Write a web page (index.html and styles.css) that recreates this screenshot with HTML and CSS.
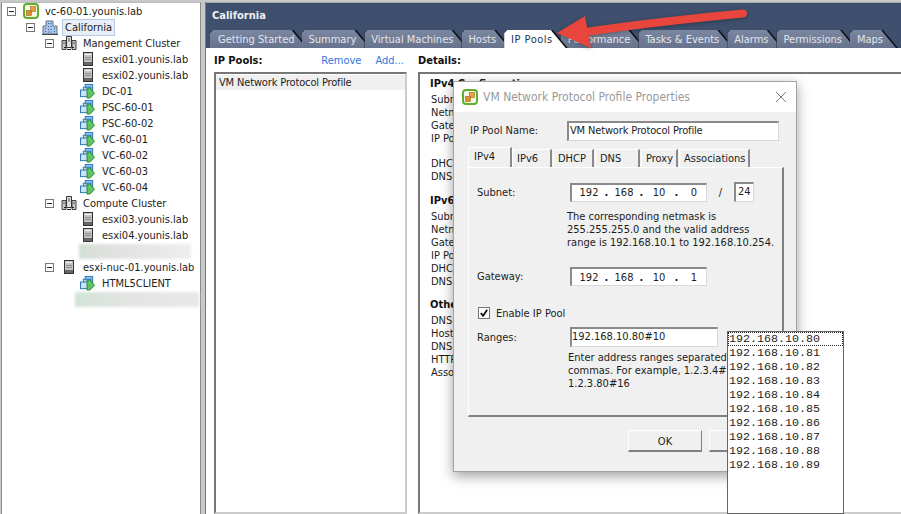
FILE: index.html
```html
<!DOCTYPE html>
<html lang="en">
<head>
<meta charset="utf-8">
<title>VM Network Protocol Profile</title>
<link rel="stylesheet" href="styles.css">
</head>
<body>
<svg class="defs" width="0" height="0" aria-hidden="true">
  <symbol id="vc" viewBox="0 0 16 16">
    <rect x="1" y="1" width="14" height="14" rx="3" fill="#f4f8e8" stroke="#5fae2e" stroke-width="2"/>
    <rect x="7.500" y="3.500" width="5" height="5" fill="#e9a23b" stroke="#9a6a20" stroke-width=".6"/>
    <rect x="3.500" y="7.500" width="5" height="5" fill="#e08a2a" stroke="#9a6a20" stroke-width=".6"/>
  </symbol>
  <symbol id="dc" viewBox="0 0 16 16">
    <path d="M1 15V7h3V2h7v5h4v8z" fill="#a9c3e6" stroke="#66728a"/>
    <path d="M6 4h1v1H6zM8.500 4h1v1h-1zM6 7h1v1H6zM8.500 7h1v1h-1zM3 9h1v1H3zM6 10h1v1H6zM8.500 10h1v1h-1zM12 9h1v1h-1zM3 12h1v1H3zM6 12.500h1v1H6zM8.500 12.500h1v1h-1zM12 12h1v1h-1z" fill="#3c62a8"/>
    <path d="M0 15.500h16" stroke="#444"/>
  </symbol>
  <symbol id="cl" viewBox="0 0 16 16">
    <path d="M1 5.500h4v9H1zM11 5.500h4v9h-4z" fill="#c9c9c9" stroke="#444"/>
    <path d="M5.500 1.500h5v11h-5z" fill="#e0e0e0" stroke="#333"/>
    <path d="M7 4h2M7 6h2M2 8h2M12 8h2" stroke="#555"/>
    <path d="M3 12.500h2M11 12.500h2M6 14.500h4" stroke="#222"/>
  </symbol>
  <symbol id="hs" viewBox="0 0 16 16">
    <rect x="3.500" y="1.500" width="9" height="13" fill="#c4c4c4" stroke="#333"/>
    <rect x="5" y="3" width="6" height="1" fill="#f2f2f2"/>
    <path d="M5 6.500h6M5 8.500h6" stroke="#8a8a8a"/>
    <rect x="4" y="11" width="8" height="3" fill="#666"/>
  </symbol>
  <symbol id="vm" viewBox="0 0 17 17">
    <rect x="5.500" y="1.500" width="8" height="7" fill="#8fc2ea" stroke="#2b71b5"/>
    <rect x="3.500" y="4.500" width="8" height="7" fill="#a8d2f1" stroke="#2b71b5"/>
    <rect x=".5" y="7.500" width="8" height="7" fill="#c9e3f7" stroke="#2b71b5"/>
    <path d="M7.500 5.500h3l5 5.500-5 5h-3z" fill="#63c463" stroke="#1f8a2d"/>
  </symbol>
</svg>

<div class="app">
  <nav class="tree">
    <div class="row lv0"><span class="exp"></span><svg class="ico"><use href="#vc"/></svg><span class="lbl">vc-60-01.younis.lab</span></div>
    <div class="row lv1"><span class="exp"></span><svg class="ico"><use href="#dc"/></svg><span class="lbl sel">California</span></div>
    <div class="row lv2"><span class="exp"></span><svg class="ico"><use href="#cl"/></svg><span class="lbl">Mangement Cluster</span></div>
    <div class="row lv3"><svg class="ico"><use href="#hs"/></svg><span class="lbl">esxi01.younis.lab</span></div>
    <div class="row lv3"><svg class="ico"><use href="#hs"/></svg><span class="lbl">esxi02.younis.lab</span></div>
    <div class="row lv3"><svg class="ico"><use href="#vm"/></svg><span class="lbl">DC-01</span></div>
    <div class="row lv3"><svg class="ico"><use href="#vm"/></svg><span class="lbl">PSC-60-01</span></div>
    <div class="row lv3"><svg class="ico"><use href="#vm"/></svg><span class="lbl">PSC-60-02</span></div>
    <div class="row lv3"><svg class="ico"><use href="#vm"/></svg><span class="lbl">VC-60-01</span></div>
    <div class="row lv3"><svg class="ico"><use href="#vm"/></svg><span class="lbl">VC-60-02</span></div>
    <div class="row lv3"><svg class="ico"><use href="#vm"/></svg><span class="lbl">VC-60-03</span></div>
    <div class="row lv3"><svg class="ico"><use href="#vm"/></svg><span class="lbl">VC-60-04</span></div>
    <div class="row lv2"><span class="exp"></span><svg class="ico"><use href="#cl"/></svg><span class="lbl">Compute Cluster</span></div>
    <div class="row lv3"><svg class="ico"><use href="#hs"/></svg><span class="lbl">esxi03.younis.lab</span></div>
    <div class="row lv3"><svg class="ico"><use href="#hs"/></svg><span class="lbl">esxi04.younis.lab</span></div>
    <div class="row"><span class="smudge smudge-a"></span></div>
    <div class="row lv2"><span class="exp"></span><svg class="ico"><use href="#hs"/></svg><span class="lbl">esxi-nuc-01.younis.lab</span></div>
    <div class="row lv3"><svg class="ico"><use href="#vm"/></svg><span class="lbl">HTML5CLIENT</span></div>
    <div class="row"><span class="smudge smudge-b"></span></div>
  </nav>

  <main class="main">
    <header class="head">
      <h1 class="title">California</h1>
      <div class="tabs">
        <span class="tab first"><span>Getting Started</span></span>
        <span class="tab"><span>Summary</span></span>
        <span class="tab"><span>Virtual Machines</span></span>
        <span class="tab"><span>Hosts</span></span>
        <span class="tab on"><span>IP Pools</span></span>
        <span class="tab"><span>Performance</span></span>
        <span class="tab"><span>Tasks &amp; Events</span></span>
        <span class="tab"><span>Alarms</span></span>
        <span class="tab"><span>Permissions</span></span>
        <span class="tab"><span>Maps</span></span>
      </div>
    </header>
    <div class="content">
      <section class="pools">
        <div class="bar"><b>IP Pools:</b><a class="lnk lnk-rm">Remove</a><a class="lnk">Add...</a></div>
        <div class="box"><div class="item">VM Network Protocol Profile</div></div>
      </section>
      <section class="details">
        <div class="bar"><b>Details:</b></div>
        <div class="box dbox">
          <h2>IPv4 Configuration</h2>
          <p>Subnet:</p><p>Netmask:</p><p>Gateway:</p><p>IP Pool Enabled:</p>
          <p class="gap">DHCP:</p><p>DNS:</p>
          <h2 class="sec">IPv6 Configuration</h2>
          <p>Subnet:</p><p>Netmask:</p><p>Gateway:</p><p>IP Pool Enabled:</p><p>DHCP:</p><p>DNS:</p>
          <h2 class="other">Other Configuration</h2>
          <p>DNS Domain:</p><p>Host Prefix:</p><p>DNS Search Path:</p><p>HTTP Proxy:</p><p>Associations:</p>
        </div>
      </section>
    </div>
  </main>
</div>

<div class="dialog">
  <div class="dtitle">
    <svg class="dico"><use href="#vc"/></svg>
    <span class="dname">VM Network Protocol Profile Properties</span>
    <svg class="dclose" viewBox="0 0 12 12"><path d="M1 1l10 10M11 1L1 11" stroke="#777" fill="none"/></svg>
  </div>
  <div class="nrow"><label class="nlabel">IP Pool Name:</label><div class="field nfield">VM Network Protocol Profile</div></div>
  <div class="dtabs">
    <span class="dtab active">IPv4</span>
    <span class="dtab w-6">IPv6</span>
    <span class="dtab w-h">DHCP</span>
    <span class="dtab w-d">DNS</span>
    <span class="dtab w-p">Proxy</span>
    <span class="dtab w-a">Associations</span>
  </div>
  <div class="panel">
    <div class="frow"><label class="flabel">Subnet:</label>
      <div class="field ip"><span>192</span><i>.</i><span>168</span><i>.</i><span>10</span><i>.</i><span>0</span></div>
      <span class="slash">/</span><div class="field mask">24</div>
    </div>
    <p class="note">The corresponding netmask is<br>255.255.255.0 and the valid address<br>range is 192.168.10.1 to 192.168.10.254.</p>
    <div class="frow gw"><label class="flabel">Gateway:</label>
      <div class="field ip"><span>192</span><i>.</i><span>168</span><i>.</i><span>10</span><i>.</i><span>1</span></div>
    </div>
    <div class="check"><span class="cbox"><svg viewBox="0 0 11 11"><path d="M2 5.500l2.500 3L9 2" stroke="#111" stroke-width="2" fill="none"/></svg></span>Enable IP Pool</div>
    <div class="frow rng"><label class="flabel">Ranges:</label><div class="field rfield">192.168.10.80#10</div></div>
    <p class="note help">Enter address ranges separated by<br>commas. For example, 1.2.3.4#10,<br>1.2.3.80#16</p>
  </div>
  <div class="btns"><span class="btn">OK</span><span class="btn">Cancel</span></div>
</div>

<ul class="popup">
  <li class="focus">192.168.10.80</li>
  <li>192.168.10.81</li>
  <li>192.168.10.82</li>
  <li>192.168.10.83</li>
  <li>192.168.10.84</li>
  <li>192.168.10.85</li>
  <li>192.168.10.86</li>
  <li>192.168.10.87</li>
  <li>192.168.10.88</li>
  <li>192.168.10.89</li>
</ul>

<svg class="arrow" viewBox="0 0 200 50" aria-hidden="true">
  <path d="M187 5.500C150 9 90 15 30 24" stroke="#e8453c" stroke-width="8" stroke-linecap="round" fill="none"/>
  <path d="M1 25L29 8l6 32z" fill="#e8453c"/>
</svg>
</body>
</html>
```
FILE: styles.css
```css
* { box-sizing: border-box; }
html, body { margin: 0; height: 100%; }
body {
  position: relative;
  width: 901px;
  height: 514px;
  overflow: hidden;
  background: #fff;
  color: #1c1c1c;
  font: 11px/13px "DejaVu Sans Condensed", "DejaVu Sans", sans-serif;
  font-stretch: condensed;
}
.defs { position: absolute; }
.app { display: flex; height: 514px; padding-top: 2px; background: #c8c8c8; }

/* tree */
.tree {
  width: 200px;
  margin-left: 1px;
  background: #fff;
  border-left: 1px solid #8c8c8c;
  border-right: 1px solid #8c8c8c;
  border-top: 1px solid #bbb;
}
.row { display: flex; align-items: center; height: 16px; white-space: nowrap; }
.lv0 { padding-left: 5px; }
.lv1 { padding-left: 24px; }
.lv2 { padding-left: 43px; }
.lv3 { padding-left: 78px; }
.exp {
  position: relative;
  flex: none;
  width: 9px;
  height: 9px;
  margin-right: 7px;
  border: 1px solid #777;
}
.exp::after { content: ""; position: absolute; left: 1px; right: 1px; top: 3px; height: 1px; background: #222; }
.ico { flex: none; width: 16px; height: 16px; }
.lbl { margin-left: 6px; }
.sel {
  margin-left: 4px;
  padding: 1px 2px;
  background: #e8eef7;
  border: 1px solid #b8cbe6;
}
.smudge { display: block; height: 15px; filter: blur(1.5px); }
.smudge-a { width: 112px; margin-left: 77px; background: linear-gradient(90deg, #cfe0d2 0, #dcdfdc 15%, #e6e6e6 60%, #eeeeee 100%); }
.smudge-b { width: 124px; margin-left: 73px; background: linear-gradient(90deg, #cfe4d6 0, #dbe3dc 18%, #e4e4e4 50%, #e8e8e8 100%); }

/* main */
.main { flex: 1; min-width: 0; margin-left: 4px; display: flex; flex-direction: column; background: #fff; border-left: 1px solid #777; }
.head { height: 46px; background: #3e506d; border-top: 1px solid #aaa; }
.title { margin: 0; padding: 6px 0 0 6px; height: 27px; font-size: 11px; line-height: 13px; font-weight: bold; color: #eef1f5; }
.tabs { display: flex; padding-left: 4px; height: 18px; }
.tab {
  position: relative;
  display: block;
  height: 18px;
  margin-right: -7px;
  padding: 3px 15px 0 7px;
  color: #e2e6ec;
  white-space: nowrap;
  background: #0c0f14;
  clip-path: polygon(3px 0, calc(100% - 15px) 0, 100% 100%, 0 100%, 0 3px);
}
.tab.first { padding-left: 8px; padding-right: 14px; }
.tab::before {
  content: "";
  position: absolute;
  inset: 0;
  background: linear-gradient(#7b87a0, #67738c);
  clip-path: polygon(3px 0, calc(100% - 17px) 0, calc(100% - 2px) 100%, 0 100%, 0 3px);
}
.tab span { position: relative; }
.tab.on { color: #1d3557; z-index: 1; letter-spacing: .5px; }
.tab.on::before { background: #fff; }

.content { flex: 1; min-height: 0; display: flex; padding: 5px 0 0 8px; }
.bar { display: flex; height: 19px; padding: 1px 3px 0 0; font-size: 11px; line-height: 14px; }
.bar b { font-weight: bold; color: #111; }
.lnk { color: #2f78e0; margin-left: 14px; }
.lnk-rm { margin-left: auto; }
.pools { width: 193px; margin-right: 11px; display: flex; flex-direction: column; }
.details { flex: 1; min-width: 0; display: flex; flex-direction: column; margin-right: -20px; }
.box { flex: 1; border: 2px solid #777; border-color: #777 #ccc #ccc #777; padding-top: 1px; }
.item { height: 15px; padding-left: 3px; background: #f0f0f0; line-height: 15px; letter-spacing: -.15px; }
.dbox { padding: 3px 0 0 10px; }
.dbox h2 { margin: 0 0 3px; font-size: 11px; line-height: 13px; font-weight: bold; color: #111; }
.dbox h2.sec { margin-top: 11px; }
.dbox h2.other { margin-top: 10px; }
.dbox p { margin: 0; padding-left: 1px; height: 13px; white-space: nowrap; }
.dbox p.gap { margin-top: 12px; }

/* dialog */
.dialog {
  position: absolute;
  left: 453px;
  top: 81px;
  width: 344px;
  height: 391px;
  background: #f0f0f0;
  border: 1px solid #a3a3a3;
  box-shadow: 0 4px 12px rgba(0, 0, 0, .38);
}
.dtitle { display: flex; align-items: center; height: 30px; padding-left: 8px; background: #fff; }
.dico { width: 16px; height: 16px; }
.dname { margin-left: 5px; font-size: 12px; color: #9a9a9a; }
.dclose { width: 12px; height: 12px; margin-left: auto; margin-right: 9px; }
.nrow { display: flex; margin-top: 9px; padding-left: 16px; }
.nlabel { width: 97px; line-height: 19px; }
.field { background: #fff; border: 1px solid #d8d8d8; border-top: 2px solid #8a8a8a; border-left: 2px solid #8a8a8a; }
.nfield { width: 212px; height: 20px; padding-left: 1px; line-height: 15px; letter-spacing: -.15px; }
.dtabs { display: flex; align-items: flex-end; height: 20px; margin-top: 6px; margin-left: 14px; }
.dtab {
  width: 40px;
  height: 18px;
  margin-right: 1px;
  padding: 2px 0 0 4px;
  background: #f0f0f0;
  border: 1px solid #fff;
  border-right: 2px solid #8a8a8a;
  border-bottom: 0;
}
.dtab.active { width: 44px; height: 20px; padding: 2px 0 0 5px; margin-right: 0; border-left: 1px solid #fff; }
.w-h { width: 41px; }
.w-d { width: 45px; }
.w-p { width: 37px; margin-right: 1px; }
.w-a { width: 71px; }
.panel {
  height: 250px;
  width: 316px;
  margin-left: 14px;
  padding: 14px 0 0 8px;
  border: 1px solid #fff;
  border-right: 2px solid #808080;
  border-bottom: 2px solid #808080;
}
.frow { display: flex; align-items: center; }
.flabel { width: 93px; }
.ip { display: flex; align-items: center; width: 137px; height: 19px; padding-left: 5px; }
.ip span { width: 24px; text-align: center; }
.ip i { width: 11px; font-style: normal; text-align: center; font-weight: bold; }
.slash { width: 27px; text-align: center; }
.mask { width: 20px; height: 20px; padding-left: 2px; line-height: 15px; }
.note { margin: 8px 0 0 90px; white-space: nowrap; }
.gw { margin-top: 18px; }
.check { display: flex; align-items: center; height: 14px; margin-top: 20px; margin-left: 1px; }
.cbox { width: 12px; height: 12px; margin-right: 6px; background: #fff; border: 1px solid #777; }
.cbox svg { display: block; width: 10px; height: 10px; }
.rng { margin-top: 7px; }
.rfield { width: 148px; height: 20px; padding-left: 0; line-height: 15px; }
.help { margin-top: 4px; margin-left: 91px; }
.btns { display: flex; justify-content: flex-end; gap: 7px; margin-top: 13px; padding-right: 13px; }
.btn {
  width: 74px;
  height: 22px;
  text-align: center;
  line-height: 22px;
  background: #f0f0f0;
  border: 1px solid #fff;
  border-right: 1px solid #808080;
  border-bottom: 2px solid #808080;
}

/* popup list */
.popup {
  position: absolute;
  left: 727px;
  top: 331px;
  width: 117px;
  height: 183px;
  margin: 0;
  padding: 0;
  list-style: none;
  background: #fff;
  border: 1px solid #666;
  font: 11.67px/14px "Liberation Mono", monospace;
  color: #2a1a1a;
}
.popup li { height: 14px; padding-left: 1px; }
.focus { outline: 1px dotted #222; outline-offset: -1px; }

.arrow { position: absolute; left: 556px; top: 8px; width: 200px; height: 50px; filter: drop-shadow(0 1px 2px rgba(0, 0, 0, .3)); }
```
